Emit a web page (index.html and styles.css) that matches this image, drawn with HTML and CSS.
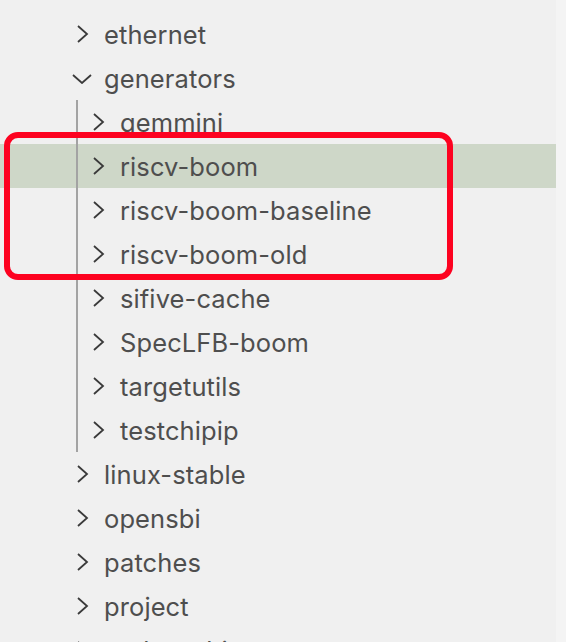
FILE: index.html
```html
<!DOCTYPE html>
<html>
<head>
<meta charset="utf-8">
<link rel="stylesheet" href="styles.css">
</head>
<body>
<div class="explorer">
  <div class="tree">
    <div class="row"><span class="twisty"><svg class="chev" viewBox="0 0 12 18"><polyline points="1,1 10,9 1,17"/></svg></span><span class="label">boot</span></div>
    <div class="row"><span class="twisty"><svg class="chev" viewBox="0 0 12 18"><polyline points="1,1 10,9 1,17"/></svg></span><span class="label">ethernet</span></div>
    <div class="row"><span class="twisty"><svg class="chev-down" viewBox="0 0 20 10"><polyline points="1,1 10,9 19,1"/></svg></span><span class="label">generators</span></div>
    <div class="group">
      <div class="row l2"><span class="twisty"><svg class="chev" viewBox="0 0 12 18"><polyline points="1,1 10,9 1,17"/></svg></span><span class="label">gemmini</span></div>
      <div class="row l2 selected"><span class="twisty"><svg class="chev" viewBox="0 0 12 18"><polyline points="1,1 10,9 1,17"/></svg></span><span class="label">riscv-boom</span></div>
      <div class="row l2"><span class="twisty"><svg class="chev" viewBox="0 0 12 18"><polyline points="1,1 10,9 1,17"/></svg></span><span class="label">riscv-boom-baseline</span></div>
      <div class="row l2"><span class="twisty"><svg class="chev" viewBox="0 0 12 18"><polyline points="1,1 10,9 1,17"/></svg></span><span class="label">riscv-boom-old</span></div>
      <div class="row l2"><span class="twisty"><svg class="chev" viewBox="0 0 12 18"><polyline points="1,1 10,9 1,17"/></svg></span><span class="label">sifive-cache</span></div>
      <div class="row l2"><span class="twisty"><svg class="chev" viewBox="0 0 12 18"><polyline points="1,1 10,9 1,17"/></svg></span><span class="label">SpecLFB-boom</span></div>
      <div class="row l2"><span class="twisty"><svg class="chev" viewBox="0 0 12 18"><polyline points="1,1 10,9 1,17"/></svg></span><span class="label">targetutils</span></div>
      <div class="row l2"><span class="twisty"><svg class="chev" viewBox="0 0 12 18"><polyline points="1,1 10,9 1,17"/></svg></span><span class="label">testchipip</span></div>
    </div>
    <div class="row"><span class="twisty"><svg class="chev" viewBox="0 0 12 18"><polyline points="1,1 10,9 1,17"/></svg></span><span class="label">linux-stable</span></div>
    <div class="row"><span class="twisty"><svg class="chev" viewBox="0 0 12 18"><polyline points="1,1 10,9 1,17"/></svg></span><span class="label">opensbi</span></div>
    <div class="row"><span class="twisty"><svg class="chev" viewBox="0 0 12 18"><polyline points="1,1 10,9 1,17"/></svg></span><span class="label">patches</span></div>
    <div class="row"><span class="twisty"><svg class="chev" viewBox="0 0 12 18"><polyline points="1,1 10,9 1,17"/></svg></span><span class="label">project</span></div>
    <div class="row"><span class="twisty"><svg class="chev" viewBox="0 0 12 18"><polyline points="1,1 10,9 1,17"/></svg></span><span class="label">rocket-chip</span></div>
  </div>
  <div class="scrolltrack"></div>
  <div class="annotation"></div>
</div>
</body>
</html>
```
FILE: styles.css
```css
html, body {
  margin: 0;
  padding: 0;
  background: #f0f0f0;
  overflow: hidden;
}
.explorer {
  position: relative;
  width: 566px;
  height: 642px;
  overflow: hidden;
  display: flex;
  font-family: Inter, "Noto Sans", sans-serif;
}
.tree {
  width: 556px;
  margin-top: -32px;
  display: flex;
  flex-direction: column;
}
.scrolltrack {
  width: 10px;
  background: #f4f4f4;
}
.row {
  height: 44px;
  display: flex;
  align-items: center;
  padding-left: 66px;
  flex-shrink: 0;
}
.row.l2 {
  padding-left: 82px;
}
.row.selected {
  background: #ced7c8;
}
.twisty {
  width: 32px;
  height: 44px;
  display: flex;
  align-items: center;
  justify-content: center;
  margin-right: 6px;
}
.chev {
  width: 12px;
  height: 18px;
  fill: none;
  stroke: #3a3a3a;
  stroke-width: 1.8;
  margin-left: 1px;
}
.chev-down {
  width: 20px;
  height: 10px;
  fill: none;
  stroke: #3a3a3a;
  stroke-width: 1.8;
  margin-left: -1px;
  margin-top: 1px;
}
.label {
  font-size: 25.5px;
  color: #4e4e4e;
  letter-spacing: 0.1px;
  white-space: nowrap;
}
.group {
  position: relative;
  display: flex;
  flex-direction: column;
}
.group::before {
  content: "";
  position: absolute;
  left: 76px;
  top: 0;
  bottom: 0;
  width: 2px;
  background: #a3a3a3;
  z-index: 1;
}
.annotation {
  position: absolute;
  left: 4px;
  top: 132px;
  width: 449px;
  height: 148px;
  box-sizing: border-box;
  border: 6px solid #fd0220;
  border-radius: 14px;
  z-index: 2;
}
```
